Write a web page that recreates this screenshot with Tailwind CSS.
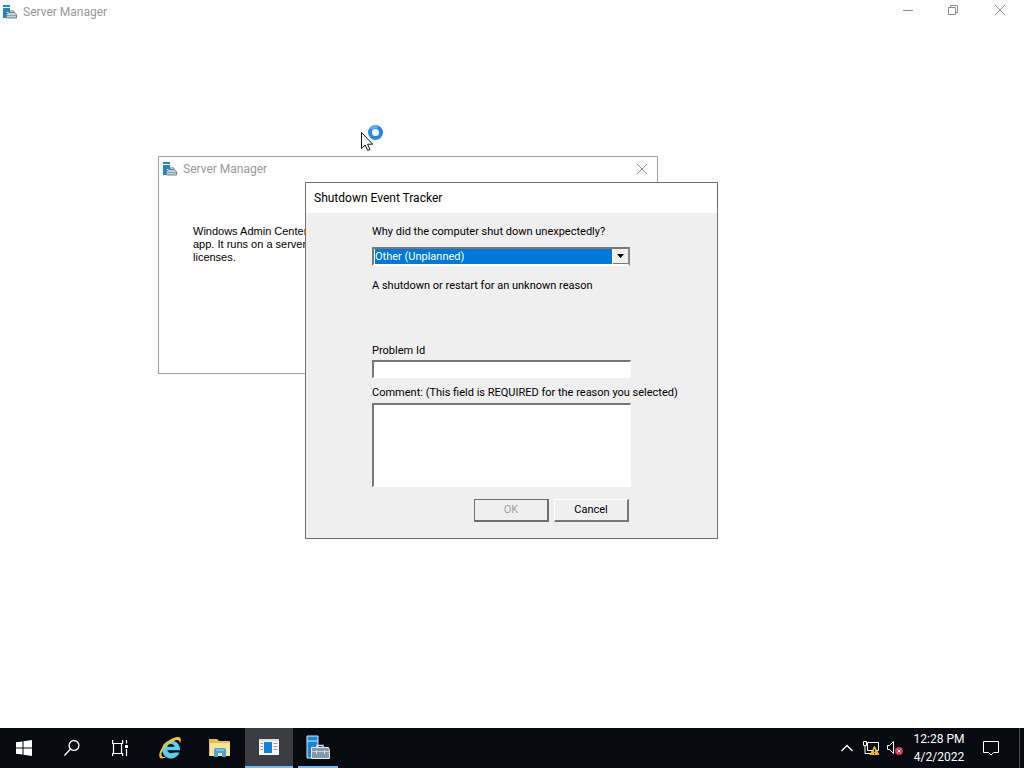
<!DOCTYPE html>
<html lang="en">
<head>
<meta charset="utf-8">
<title>Server Manager</title>
<script src="https://cdn.jsdelivr.net/npm/@tailwindcss/browser@4"></script>
</head>
<body class="flex min-h-screen flex-col bg-[#fefefe] font-['Roboto','Noto_Sans',sans-serif] text-xs text-black">

<svg class="hidden" aria-hidden="true">
  <symbol id="server" viewBox="0 0 24 24">
    <path d="M1 1h11v22H1z" fill="#1c84d6" stroke="#d8ebf8" stroke-width="1"/>
    <path d="M1 6h11" stroke="#d8ebf8"/>
    <path d="M11 12.500v-2h6v2" fill="none" stroke="#dde5ea" stroke-width="1.500"/>
    <path d="M5.500 12.500h17l1 3v8h-18z" fill="#8199a8" stroke="#e8eef2"/>
    <path d="M5.500 16.500h18" stroke="#c2cfd7"/><path d="M10.500 15.500v3M18.500 15.500v3" stroke="#e8eef2"/>
  </symbol>
  <symbol id="server-small" viewBox="0 0 16 16">
    <path d="M0 1h7v2H0zM0 4h7v4H4v6H0z" fill="#2387bd"/>
    <path d="M7 8.500V7h4v1.500" fill="none" stroke="#6d8491"/>
    <path d="M3.500 10.500l2-2h6l2 2v3.500h-10z" fill="#c4ced4" stroke="#6d8491"/>
    <path d="M4 11.500h9" stroke="#8fa1ac"/>
  </symbol>
</svg>

<main class="relative flex-1 overflow-hidden">
  <header class="flex h-6 items-center justify-between text-[#999]">
    <div class="flex items-center gap-1 pl-[3px]">
      <svg class="size-4" aria-hidden="true"><use href="#server-small"/></svg>
      <h1>Server Manager</h1>
    </div>
    <div class="flex h-5 self-start text-[#8c8c8c]">
      <button class="grid w-11 place-items-center" aria-label="Minimize"><svg class="h-3 w-3" viewBox="0 0 12 12"><path d="M1 6.500h10" stroke="currentColor"/></svg></button>
      <button class="grid w-[46px] place-items-center" aria-label="Restore"><svg class="h-3 w-3" viewBox="0 0 12 12" fill="none" stroke="currentColor"><path d="M1.500 3.500h7v7h-7zM3.500 3.500v-2h7v7h-2"/></svg></button>
      <button class="grid w-12 place-items-center" aria-label="Close"><svg class="h-3 w-3" viewBox="0 0 12 12"><path d="M1 1l10 10M11 1L1 11" stroke="currentColor"/></svg></button>
    </div>
  </header>

  <section class="absolute left-[158px] top-[156px] h-[218px] w-[500px] border border-[#a0a0a0] bg-white">
    <header class="flex h-6 items-center justify-between pl-1 text-[#999]">
      <div class="flex items-center gap-1">
        <svg class="size-4" aria-hidden="true"><use href="#server-small"/></svg>
        <h2>Server Manager</h2>
      </div>
      <button class="grid w-[30px] place-items-center" aria-label="Close window"><svg class="h-3 w-3" viewBox="0 0 12 12"><path d="M1 1l10 10M11 1L1 11" stroke="#8c8c8c"/></svg></button>
    </header>
    <p class="pl-[34px] pt-11 font-['Liberation_Sans',sans-serif] text-[11px] leading-[13px]">Windows Admin Center is a browser<br>app. It runs on a server without<br>licenses.</p>
  </section>

  <section role="dialog" aria-labelledby="tracker" class="absolute left-[305px] top-[182px] w-[413px] border border-[#6e6e6e] bg-[#efefef] text-[11px]">
    <h2 id="tracker" class="flex h-[30px] items-center bg-white pl-2 text-xs">Shutdown Event Tracker</h2>
    <form class="flex flex-col pb-4 pl-[66px] pt-[11px] leading-4">
      <label for="reason">Why did the computer shut down unexpectedly?</label>
      <div class="relative mt-[7px] h-[19px] w-[258px] border-2 border-b-white border-l-[#777] border-r-[#8a8a8a] border-t-[#777] bg-white px-px">
        <select id="reason" class="block h-[15px] w-[237px] appearance-none bg-[#0078d7] text-white outline-none"><option>Other (Unplanned)</option></select>
        <span class="pointer-events-none absolute inset-y-0 right-0 grid w-[15px] place-items-center border-b border-[#777] bg-[#efefef]"><svg class="h-1 w-[7px]" viewBox="0 0 7 4"><path d="M0 0h7L3.500 4z"/></svg></span>
      </div>
      <p class="mt-3">A shutdown or restart for an unknown reason</p>
      <label for="problem" class="mt-[49px]">Problem Id</label>
      <input id="problem" class="mt-px h-[18px] w-[259px] border-2 border-b border-r border-b-white border-l-[#777] border-r-white border-t-[#777] bg-white px-1 outline-none">
      <label for="comment" class="mt-[7px]">Comment: (This field is REQUIRED for the reason you selected)</label>
      <textarea id="comment" class="mt-0.5 h-[84px] w-[259px] resize-none border-2 border-b border-r border-b-white border-l-[#777] border-r-white border-t-[#777] bg-white px-1 outline-none"></textarea>
      <div class="mt-3 flex w-[257px] justify-end gap-[5px]">
        <button type="button" disabled class="h-[23px] w-[75px] border border-b-2 border-r-2 border-[#6e6e6e] text-[#a0a0a0]">OK</button>
        <button type="button" class="h-[23px] w-[75px] border border-b-2 border-r-2 border-b-[#777] border-l-white border-r-[#777] border-t-white">Cancel</button>
      </div>
    </form>
  </section>

  <svg class="absolute left-[360px] top-[123px] h-7 w-6" viewBox="0 0 24 28" aria-hidden="true">
    <circle cx="15.500" cy="9.500" r="5.500" fill="#fff" stroke="#2788df" stroke-width="4"/>
    <path d="M11 6a5.500 5.500 0 0 1 7-1.500" fill="none" stroke="#62b0ef" stroke-width="3"/>
    <path d="M1.500 9.500v16l3.700-3.500 2.500 5.500 2.300-1-2.400-5.300h5.100z" fill="#fff" stroke="#111"/>
  </svg>
</main>

<footer class="flex h-10 items-stretch justify-between bg-[#070a10] text-white">
  <nav class="flex" aria-label="Taskbar">
    <button class="grid w-12 place-items-center" aria-label="Start"><svg class="size-4" viewBox="0 0 16 16" fill="#fff"><path d="M0 2.300L6.500 1.400v6.100H0zM7.500 1.200L16 0v7.500H7.500zM0 8.500h6.500v6.100L0 13.700zM7.500 8.500H16V16l-8.500-1.200z"/></svg></button>
    <button class="grid w-12 place-items-center" aria-label="Search"><svg class="size-4" viewBox="0 0 16 16" fill="none" stroke="#fff" stroke-width="1.300"><circle cx="10" cy="5.500" r="4.900"/><path d="M6.500 9L.5 15.500"/></svg></button>
    <button class="grid w-12 place-items-center" aria-label="Task View"><svg class="size-4" viewBox="0 0 16 16" fill="none" stroke="#fff" stroke-width="1.200"><path d="M.6 0v3.500h10V0M.6 16v-2.500h10V16M1.500 3.500v10M9.500 3.500v10M14.500 0v3.500M14.500 9v7"/><path d="M13 5h3v3h-3z" fill="#fff" stroke="none"/></svg></button>
    <button class="grid w-[51px] place-items-center" aria-label="Internet Explorer"><svg class="size-6" viewBox="0 0 24 24" fill="none">
      <path d="M21.500 16.500A9 9 0 1 1 22 12.500v1.700H9.300c.5 3.200 5 3.900 6.600 2.300zM9.300 10.800h7.200c-.5-3.700-6.500-3.700-7.200 0z" fill="#5ccdf4" fill-rule="evenodd"/>
      <path d="M9 20.500C2 25-1 21.500 3 13.500 8 4 20-2 22.500 2.500c.8 1.500.3 3-.7 5C22 4 19.500 3 15.500 5 9 8 4.500 13 3.500 17.500c-.6 3.500 2 4 5.500 3z" fill="#f2c230"/>
    </svg></button>
    <button class="grid w-[50px] place-items-center" aria-label="File Explorer"><svg class="h-5 w-[22px]" viewBox="0 0 22 20">
      <path d="M0 1h8l2 2h11v15H0z" fill="#e9bd52"/><path d="M1 5h20v13H1z" fill="#fbe49a"/>
      <path d="M5 19v-7q0-2 2-2h8q2 0 2 2v7h-4v-4H9v4z" fill="#49a5cf"/><path d="M7 12h8" stroke="#a9d9ec"/>
    </svg></button>
    <button class="grid w-12 place-items-center border-b-2 border-[#76b9ed] bg-[#3b3d42]" aria-label="Shutdown Event Tracker"><svg class="h-4 w-5" viewBox="0 0 20 16">
      <path d="M0 0h20v16H0z" fill="#f5f5f5"/><path d="M0 0h20v2H0z" fill="#dcdcdc"/><path d="M5 3h8v11H5z" fill="#1080dd"/>
      <path d="M1.500 4.500H4m-2.500 3H4m-2.500 3H4m10.500-6h4m-4 3h4m-4 3h4" stroke="#999"/>
    </svg></button>
    <button class="ml-[5px] grid w-10 place-items-center border-b-2 border-[#76b9ed]" aria-label="Server Manager"><svg class="size-6"><use href="#server"/></svg></button>
  </nav>
  <div class="flex items-stretch">
    <button class="grid w-6 place-items-center" aria-label="Show hidden icons"><svg class="h-2 w-3" viewBox="0 0 12 8"><path d="M.5 7L6 1.500 11.500 7" fill="none" stroke="#fff" stroke-width="1.300"/></svg></button>
    <button class="grid w-6 place-items-center" aria-label="Network"><svg class="size-4" viewBox="0 0 16 16" fill="none" stroke="#fff">
      <path d="M4.500 2.500h11v8h-11zM.5 1.500h3v4h-3zM2 5.500v8h6M5 13.500h5"/><path d="M11.500 5.500L16.500 15h-10z" fill="#f7b52c" stroke="none"/><path d="M11.500 9v3m0 1v1" stroke="#222"/>
    </svg></button>
    <button class="grid w-6 place-items-center" aria-label="Volume muted"><svg class="size-4" viewBox="0 0 16 16" fill="none" stroke="#fff">
      <path d="M.5 5.500h2l4-4v12l-4-4h-2z"/><circle cx="12" cy="11" r="4" fill="#d33a50" stroke="none"/><path d="M10.500 9.500l3 3m0-3l-3 3"/>
    </svg></button>
    <time datetime="2022-04-02T12:28" class="flex w-16 flex-col justify-center text-center leading-[18px]"><span>12:28 PM</span><span>4/2/2022</span></time>
    <button class="grid w-10 place-items-center" aria-label="Notifications"><svg class="size-4" viewBox="0 0 16 16"><path d="M.5 1.500h15v11h-5L8 15l-2.500-2.500h-5z" fill="none" stroke="#fff"/></svg></button>
    <button class="ml-2 w-[5px] border-l border-[#4b4e54]" aria-label="Show desktop"></button>
  </div>
</footer>
</body>
</html>
